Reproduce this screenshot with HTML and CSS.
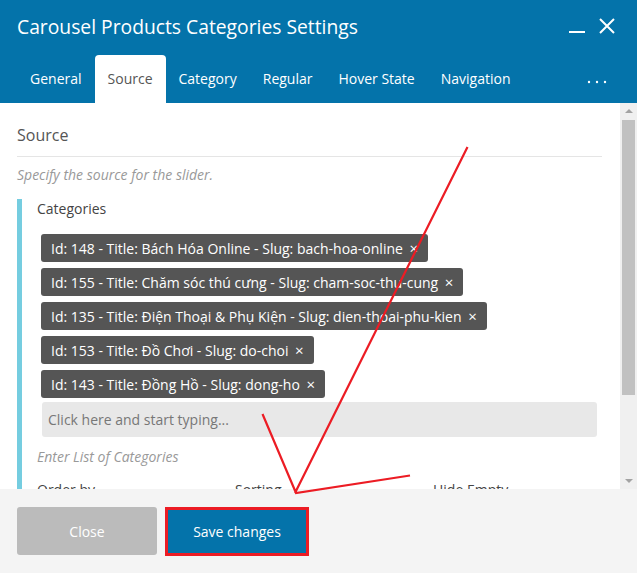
FILE: index.html
```html
<!DOCTYPE html>
<html lang="vi">
<head>
<meta charset="utf-8">
<title>Carousel Products Categories Settings</title>
<link rel="stylesheet" href="styles.css">
</head>
<body>
<div class="modal">
  <header class="header">
    <div class="title-row">
      <h1 class="title">Carousel Products Categories Settings</h1>
      <div class="win-actions">
        <svg class="icon-min" width="18" height="18" viewBox="0 0 18 18"><rect x="1" y="14" width="16" height="2" fill="#fff"/></svg>
        <svg class="icon-close" width="18" height="18" viewBox="0 0 18 18"><path d="M2 2 L16 16 M16 2 L2 16" stroke="#fff" stroke-width="2" fill="none"/></svg>
      </div>
    </div>
    <nav class="tabs">
      <span class="tab">General</span>
      <span class="tab active">Source</span>
      <span class="tab">Category</span>
      <span class="tab">Regular</span>
      <span class="tab">Hover State</span>
      <span class="tab">Navigation</span>
      <span class="tab-more"><svg width="20" height="6" viewBox="0 0 20 6"><circle cx="2" cy="3" r="1.2" fill="#fff"/><circle cx="10" cy="3" r="1.2" fill="#fff"/><circle cx="18" cy="3" r="1.2" fill="#fff"/></svg></span>
    </nav>
  </header>
  <div class="body">
    <div class="content">
      <h2 class="section-title">Source</h2>
      <p class="section-desc">Specify the source for the slider.</p>
      <div class="group">
        <div class="group-label">Categories</div>
        <div class="tags">
          <span class="tag">Id: 148 - Title: Bách Hóa Online - Slug: bach-hoa-online <i class="x">×</i></span>
          <span class="tag">Id: 155 - Title: Chăm sóc thú cưng - Slug: cham-soc-thu-cung <i class="x">×</i></span>
          <span class="tag">Id: 135 - Title: Điện Thoại &amp; Phụ Kiện - Slug: dien-thoai-phu-kien <i class="x">×</i></span>
          <span class="tag">Id: 153 - Title: Đồ Chơi - Slug: do-choi <i class="x">×</i></span>
          <span class="tag">Id: 143 - Title: Đồng Hồ - Slug: dong-ho <i class="x">×</i></span>
          <div class="type-input">Click here and start typing...</div>
        </div>
        <p class="group-desc">Enter List of Categories</p>
        <div class="cols">
          <span class="col">Order by</span>
          <span class="col">Sorting</span>
          <span class="col">Hide Empty</span>
        </div>
      </div>
    </div>
    <div class="scrollbar">
      <span class="arrow-up"></span>
      <span class="thumb"></span>
      <span class="arrow-down"></span>
    </div>
  </div>
  <footer class="footer">
    <button class="btn btn-close">Close</button>
    <button class="btn btn-save">Save changes</button>
  </footer>
  <svg class="annot" width="637" height="573" viewBox="0 0 637 573">
    <path d="M467.5 147 L295 493 M262.5 414 L296 493 L410 475.5" stroke="#ec1c24" stroke-width="2.2" fill="none"/>
  </svg>
</div>
</body>
</html>
```
FILE: styles.css
```css
* { box-sizing: border-box; }
html, body { margin: 0; padding: 0; }
body {
  font-family: "Open Sans", "Noto Sans", sans-serif;
  background: #fff;
}
.modal {
  position: relative;
  width: 637px;
  height: 573px;
  display: flex;
  flex-direction: column;
  overflow: hidden;
}
.header {
  background: #0473aa;
  color: #fff;
}
.title-row {
  height: 55px;
  display: flex;
  align-items: center;
  justify-content: space-between;
  padding: 0 21px 3px 17px;
}
.title {
  margin: 0;
  font-size: 19.3px;
  font-weight: 400;
}
.win-actions {
  display: flex;
  gap: 12px;
  align-items: center;
}
.tabs {
  height: 48px;
  display: flex;
  align-items: stretch;
  padding-left: 17px;
}
.tab {
  padding: 0 13px;
  line-height: 47px;
  font-size: 14px;
  color: #fff;
}
.tab.active {
  background: #fff;
  color: #555;
  border-radius: 4px 4px 0 0;
}
.tab-more {
  margin-left: auto;
  margin-right: 30px;
  display: flex;
  align-items: center;
  padding-top: 5px;
}
.body {
  flex: 1;
  display: flex;
  min-height: 0;
  background: #fff;
}
.content {
  flex: 1;
  padding: 21px 18px 0 17px;
  overflow: hidden;
}
.section-title {
  margin: 0;
  font-size: 16px;
  font-weight: 400;
  color: #555;
  line-height: 22px;
  padding-bottom: 10px;
  border-bottom: 1px solid #e5e5e5;
}
.section-desc {
  margin: 8px 0 15px;
  font-size: 14px;
  line-height: 19px;
  font-style: italic;
  color: #999;
}
.group {
  border-left: 5px solid #75cde0;
  padding-left: 15px;
}
.group-label {
  font-size: 14px;
  line-height: 20px;
  color: #444;
}
.tags {
  margin-top: 15px;
  padding-left: 4px;
  display: flex;
  flex-direction: column;
  align-items: flex-start;
  gap: 6px;
}
.tag {
  background: #555;
  color: #fff;
  font-size: 14px;
  line-height: 28px;
  height: 28px;
  padding: 0 10px;
  border-radius: 3px;
  white-space: nowrap;
}
.tag .x {
  font-style: normal;
  font-size: 15px;
  margin-left: 3px;
}
.type-input {
  margin: -2px 5px 0 1px;
  align-self: stretch;
  height: 35px;
  line-height: 35px;
  background: #e8e8e8;
  border-radius: 3px;
  color: #777;
  font-size: 14px;
  padding-left: 6px;
}
.group-desc {
  margin: 10px 0 0;
  font-size: 14px;
  line-height: 19px;
  font-style: italic;
  color: #999;
}
.cols {
  display: grid;
  grid-template-columns: 198px 198px 1fr;
  margin-top: 14px;
  font-size: 14px;
  color: #444;
}
.scrollbar {
  width: 17px;
  background: #f0f0f0;
  display: flex;
  flex-direction: column;
  align-items: center;
  padding: 6px 0 6px;
}
.arrow-up, .arrow-down {
  width: 0;
  height: 0;
  border-left: 4px solid transparent;
  border-right: 4px solid transparent;
}
.arrow-up { border-bottom: 4px solid #a3a3a3; }
.arrow-down { border-top: 4px solid #a3a3a3; margin-top: auto; }
.thumb {
  width: 13px;
  height: 275px;
  background: #c1c1c1;
  margin-top: 7px;
}
.footer {
  height: 84px;
  background: #f4f4f4;
  display: flex;
  align-items: center;
  gap: 8px;
  padding: 0 17px;
}
.btn {
  font-family: "Open Sans", "Noto Sans", sans-serif;
  font-size: 14px;
  color: #fff;
  height: 48px;
  border-radius: 3px;
  cursor: pointer;
}
.btn-close {
  width: 140px;
  background: #bbb;
  border: 0;
}
.btn-save {
  width: 144px;
  height: 49px;
  background: #0473aa;
  border: 3px solid #ec1c24;
  border-radius: 0;
}
.annot {
  position: absolute;
  left: 0;
  top: 0;
  pointer-events: none;
}
```
